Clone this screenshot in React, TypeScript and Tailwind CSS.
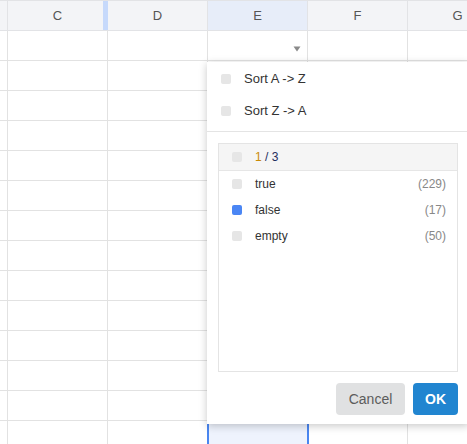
import React from "react";

const cols = ["C", "D", "E", "F", "G"];
const rowCount = 14;

function Box({ on }: { on?: boolean }) {
  return (
    <span
      className={
        "inline-block w-[10px] h-[10px] rounded-[2px] shrink-0 " +
        (on ? "bg-[#4a86f4]" : "bg-[#e6e6e6]")
      }
    />
  );
}

export default function App() {
  return (
    <div
      className="relative w-[467px] h-[444px] overflow-hidden bg-white"
      style={{ fontFamily: '"Liberation Sans", Arial, sans-serif' }}
    >
      {/* header */}
      <div className="flex h-[31px] border-t border-b border-[#e2e3e6] bg-[#f3f4f7]">
        <div className="w-[8px] shrink-0 border-r border-[#e2e3e6]" />
        {cols.map((c) => (
          <div
            key={c}
            className={
              "relative w-[100px] shrink-0 flex items-center justify-center text-[13px] text-[#555] border-r " +
              (c === "C" ? "border-[#c6d9fb]" : "border-[#e2e3e6]") +
              (c === "E" ? " bg-[#e7edf9]" : "")
            }
          >
            {c}
            {c === "C" && (
              <span className="absolute right-0 top-0 bottom-0 w-[4px] bg-[#c6d9fb]" />
            )}
          </div>
        ))}
      </div>
      {/* rows */}
      {Array.from({ length: rowCount }).map((_, r) => (
        <div key={r} className="flex h-[30px] border-b border-[#e2e2e2]">
          <div className="w-[8px] shrink-0 border-r border-[#e2e2e2]" />
          {cols.map((c) => (
            <div
              key={c}
              className={
                "relative w-[100px] shrink-0 border-r border-[#e2e2e2]" +
                (r === rowCount - 1 && c === "E" ? " bg-[#eef3fd]" : "")
              }
            >
              {r === 0 && c === "E" && (
                <svg
                  className="absolute left-[85px] top-[15px]"
                  width="8"
                  height="6"
                  viewBox="0 0 8 6"
                >
                  <path d="M0.5 0.5 L7.5 0.5 L4 5.5 Z" fill="#8a8a8a" />
                </svg>
              )}
            </div>
          ))}
        </div>
      ))}

      {/* selection */}
      <div className="absolute left-[207px] top-[420px] w-[102px] h-[32px] border-2 border-[#4a86f0]" />

      {/* filter panel */}
      <div className="absolute left-[207px] top-[62px] w-[262px] h-[362px] bg-white shadow-[0_2px_8px_rgba(0,0,0,0.22)] flex flex-col">
        <div className="pt-[1px]">
          <div className="h-[32px] flex items-center pl-[14px] gap-[13px] text-[13px] text-[#333]">
            <Box />
            <span>Sort A -&gt; Z</span>
          </div>
          <div className="h-[32px] flex items-center pl-[14px] gap-[13px] text-[13px] text-[#333]">
            <Box />
            <span>Sort Z -&gt; A</span>
          </div>
        </div>
        <div className="mt-[4px] border-t border-[#e4e4e4]" />
        <div className="mt-[11px] ml-[11px] w-[240px] h-[229px] border border-[#e4e4e4] flex flex-col">
          <div className="h-[27px] bg-[#f5f5f5] border-b border-[#e6e6e6] flex items-center pl-[13px] gap-[13px] text-[12px]">
            <Box />
            <span>
              <span className="text-[#c98a06]">1</span>
              <span className="text-[#1f2d5c]"> / 3</span>
            </span>
          </div>
          {[
            { l: "true", n: "(229)", on: false },
            { l: "false", n: "(17)", on: true },
            { l: "empty", n: "(50)", on: false },
          ].map((it) => (
            <div
              key={it.l}
              className="h-[26px] flex items-center pl-[13px] pr-[11px] gap-[13px] text-[12px]"
            >
              <Box on={it.on} />
              <span className="text-[#333] flex-1">{it.l}</span>
              <span className="text-[#888]">{it.n}</span>
            </div>
          ))}
        </div>
        <div className="mt-[11px] ml-[11px] w-[240px] flex justify-end gap-[8px]">
          <button className="w-[69px] h-[32px] rounded-[4px] bg-[#e0e1e2] text-[14px] text-[#5c5c5c]">
            Cancel
          </button>
          <button className="w-[45px] h-[32px] rounded-[4px] bg-[#2185d0] text-[14px] font-bold text-white">
            OK
          </button>
        </div>
      </div>
    </div>
  );
}
